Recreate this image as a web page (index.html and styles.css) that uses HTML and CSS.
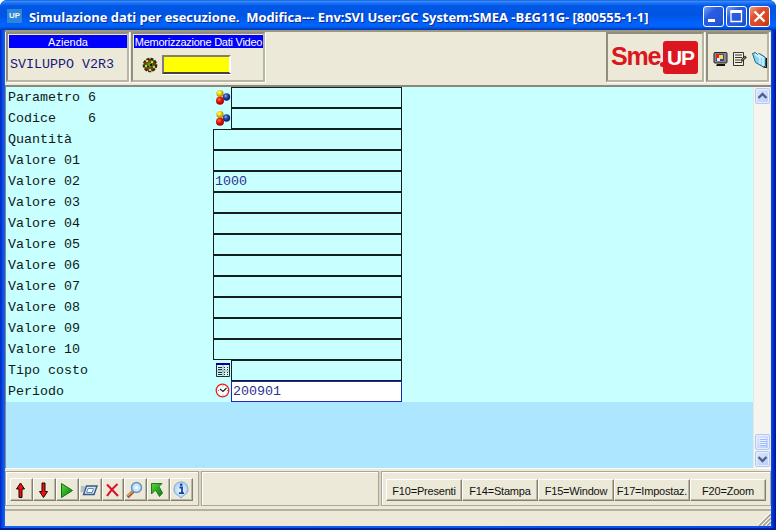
FILE: index.html
```html
<!DOCTYPE html>
<html lang="it">
<head>
<meta charset="utf-8">
<title>Simulazione dati per esecuzione</title>
<link rel="stylesheet" href="styles.css">
</head>
<body>
<svg class="defs" width="0" height="0" aria-hidden="true">
  <defs>
    <radialGradient id="gy" cx=".4" cy=".35"><stop offset="0" stop-color="#fff9a0"/><stop offset=".5" stop-color="#f5dd10"/><stop offset="1" stop-color="#b99c00"/></radialGradient>
    <radialGradient id="gr" cx=".4" cy=".35"><stop offset="0" stop-color="#ff7a60"/><stop offset=".5" stop-color="#ee1c10"/><stop offset="1" stop-color="#b00800"/></radialGradient>
    <radialGradient id="gb" cx=".4" cy=".35"><stop offset="0" stop-color="#9ab8f0"/><stop offset=".5" stop-color="#2c50b8"/><stop offset="1" stop-color="#14287c"/></radialGradient>
    <linearGradient id="gg" x2="1" y2="1"><stop offset="0" stop-color="#5cd63c"/><stop offset="1" stop-color="#087a08"/></linearGradient>
    <radialGradient id="lens"><stop offset="0" stop-color="#f4fcff"/><stop offset="1" stop-color="#a8d4f4"/></radialGradient>
    <symbol id="balls" viewBox="0 0 16 16">
      <circle cx="5" cy="4.500" r="3.600" fill="url(#gy)"/><circle cx="11.500" cy="8" r="3.700" fill="url(#gb)"/><circle cx="5" cy="11.700" r="4" fill="url(#gr)"/>
    </symbol>
  </defs>
</svg>
<div class="window">
  <header class="titlebar">
    <span class="app-icon">UP</span>
    <h1 class="title">Simulazione dati per esecuzione.&nbsp; Modifica--- Env:SVI User:GC System:SMEA -B£G11G- [800555-1-1]</h1>
    <div class="win-buttons">
      <button class="wb"><svg width="21" height="21"><rect x="5" y="13" width="7" height="3" fill="#fff"/></svg></button>
      <button class="wb"><svg width="21" height="21"><path d="M5 5.500h10.500v10H5z" fill="none" stroke="#fff" stroke-width="1.300"/><path d="M4.400 5.500h11.700" stroke="#fff" stroke-width="3"/></svg></button>
      <button class="wb close"><svg width="21" height="21"><path d="M5.500 5.500l10 10M15.500 5.500l-10 10" stroke="#fff" stroke-width="2.300"/></svg></button>
    </div>
  </header>

  <div class="client">
    <div class="topbar">
      <section class="panel azienda"><h2 class="cap">Azienda</h2><div class="mono company">SVILUPPO V2R3</div></section>
      <section class="panel memo"><h2 class="cap tight">Memorizzazione Dati Video</h2>
        <div class="memo-row">
          <svg width="16" height="16"><circle cx="8" cy="8" r="6.300" fill="#4d6b18" stroke="#222c08" stroke-width="2" stroke-dasharray="3 1.200"/><path d="M4 3h2v2H4zM9 4h2v2H9zM3 8h2v2H3zM11 9h2v2h-2zM7 12h2v2H7z" fill="#f0c840"/><path d="M7 2h2v2H7zM2 5h2v2H2zM11 6h2v2h-2zM4 11h2v2H4zM9 10h2v2H9z" fill="#a02018"/><path d="M6 6h3v4H6z" fill="#50a030"/><path d="M8 7h2v2H8zM5 9h2v1H5z" fill="#181808"/></svg>
          <span class="yellow"></span>
        </div>
      </section>
      <div class="spacer"></div>
      <section class="panel logo"><span class="sme">Sme</span><span class="dot"></span><span class="up">UP</span></section>
      <section class="panel tools">
        <svg width="15" height="16"><rect x="1" y="1.500" width="13" height="10.500" rx="1" fill="#888" stroke="#222"/><rect x="3" y="3" width="8" height="7" fill="#3048b0"/><rect x="3" y="3" width="3" height="4" fill="#e82020"/><rect x="6" y="4" width="4" height="4" fill="#ffe020"/><rect x="4" y="7" width="3" height="3" fill="#e8e8f8"/><path d="M4 13h8v2H3z" fill="#111"/></svg>
        <svg width="15" height="16"><path d="M1.500 1.500h10v13h-10z" fill="#f4f0dc" stroke="#333"/><path d="M3 4h7M3 6.500h7M3 9h5M3 11.500h7" stroke="#333"/><path d="M9 10l5-4.500" stroke="#222" stroke-width="2.400"/><path d="M9.500 9.500l4-3.500" stroke="#c8a850"/></svg>
        <svg width="17" height="17"><path d="M1.500 2.500l3-1 2 2 2-1 6 4v8.500l-2 1-8-4.500z" fill="#88d4f4" stroke="#24627e"/><path d="M7 3.500l5 3.500v8M4 3l5 4v6" stroke="#e0f8ff" stroke-width="1.300" fill="none"/><path d="M12.500 16l3 .5V7" stroke="#111" fill="none" stroke-width="1.200"/></svg>
      </section>
    </div>

    <div class="work">
      <main class="view">
        <div class="form mono">
          <div class="row"><label>Parametro 6</label><svg class="ic"><use href="#balls"/></svg><span class="field"></span></div>
          <div class="row"><label>Codice&nbsp;&nbsp;&nbsp; 6</label><svg class="ic"><use href="#balls"/></svg><span class="field"></span></div>
          <div class="row"><label>Quantità</label><span class="field"></span></div>
          <div class="row"><label>Valore 01</label><span class="field"></span></div>
          <div class="row"><label>Valore 02</label><span class="field">1000</span></div>
          <div class="row"><label>Valore 03</label><span class="field"></span></div>
          <div class="row"><label>Valore 04</label><span class="field"></span></div>
          <div class="row"><label>Valore 05</label><span class="field"></span></div>
          <div class="row"><label>Valore 06</label><span class="field"></span></div>
          <div class="row"><label>Valore 07</label><span class="field"></span></div>
          <div class="row"><label>Valore 08</label><span class="field"></span></div>
          <div class="row"><label>Valore 09</label><span class="field"></span></div>
          <div class="row"><label>Valore 10</label><span class="field"></span></div>
          <div class="row"><label>Tipo costo</label><svg class="ic" viewBox="0 0 16 16"><path d="M1.500 1.500h13v13h-13z" fill="#d8f4f4" stroke="#1c3038"/><path d="M1 2h14" stroke="#0000a0" stroke-width="2"/><path d="M3 5.500h4M3 7.500h4M9 5.500h1M9 7.500h1M12 5.500h1M12 7.500h1M3 10.500h4M3 12.500h4M9 10.500h1M9 12.500h1M12 10.500h1M12 12.500h1" stroke="#1c3038"/><path d="M2 9h12M8 3v11" stroke="#7c9898" stroke-width=".7"/></svg><span class="field"></span></div>
          <div class="row"><label>Periodo</label><svg class="ic" viewBox="0 0 16 16"><circle cx="7.500" cy="7.500" r="6.300" fill="#fff" stroke="#f02020" stroke-width="1.300"/><path d="M5 6l3 2.500L11.500 5" fill="none" stroke="#222" stroke-width="1.200"/><path d="M8 2.500v1M8 11.500v1M3 7.500h1M12 7.500h1" stroke="#777"/></svg><span class="field active">200901</span></div>
        </div>
      </main>
      <div class="scroll">
        <button class="sb"><svg width="15" height="16"><path d="M3.500 10l4-4 4 4" fill="none" stroke="#4d6185" stroke-width="2.400"/></svg></button>
        <div class="track"></div>
        <button class="sb"><svg width="15" height="16"><path d="M4 4.500h7M4 6.500h7M4 8.500h7M4 10.500h7" stroke="#eef4fe"/><path d="M5 5.500h7M5 7.500h7M5 9.500h7M5 11.500h7" stroke="#8cb0f8" stroke-width=".7"/></svg></button>
        <button class="sb"><svg width="15" height="16"><path d="M3.500 6l4 4 4-4" fill="none" stroke="#4d6185" stroke-width="2.400"/></svg></button>
      </div>
    </div>

    <div class="bottombar">
      <div class="group icons">
        <button class="tb"><svg width="20" height="20"><path d="M9.500 3l4 6h-2.500v8.500H8V9H5.500z" fill="#f01010" stroke="#200"/></svg></button>
        <button class="tb"><svg width="20" height="20"><path d="M9.500 17.500l4-6h-2.500V3H8v8.500H5.500z" fill="#f01010" stroke="#200"/></svg></button>
        <button class="tb"><svg width="20" height="20"><path d="M4.500 3.500l11 7-11 7z" fill="url(#gg)" stroke="#107010"/></svg></button>
        <button class="tb"><svg width="20" height="20"><path d="M6.500 6h10.500l-3 8.500H3.500z" fill="#d8e8fa" stroke="#345884" stroke-width="1.400"/><path d="M8 8.500h5.500l-1.300 4H6.600z" fill="#fff" stroke="#6088b8"/><path d="M1 7h4M1 9h4M.5 11h4" stroke="#7898bc"/></svg></button>
        <button class="tb"><svg width="20" height="20"><path d="M4 4.500q5 5 11 11.500M14.500 4q-6 5-10.500 12" fill="none" stroke="#d8142c" stroke-width="2.100"/></svg></button>
        <button class="tb"><svg width="20" height="20"><path d="M2.500 17l6-6" stroke="#985830" stroke-width="3.400"/><path d="M2.500 16l5.500-5" stroke="#e8a878" stroke-width="1.200"/><circle cx="11.500" cy="7.500" r="5" fill="url(#lens)" stroke="#6c94c4" stroke-width="1.500"/></svg></button>
        <button class="tb"><svg width="20" height="20"><path d="M3.500 3.500h10.500l-3 3 3.500 6.500-3 3.500-4-6.500-4 4z" fill="url(#gg)" stroke="#207820"/></svg></button>
        <button class="tb"><svg width="20" height="20"><path d="M10 2a7 7 0 0 1 3 13.300L10 18l-3-2.700A7 7 0 0 1 10 2z" fill="url(#lens)" stroke="#88a8cc"/><path d="M8.500 7.500H11v5.500M8 13.200h5" fill="none" stroke="#1840a0" stroke-width="1.800"/><circle cx="10.200" cy="4.800" r="1.300" fill="#1840a0"/></svg></button>
      </div>
      <div class="group blank"></div>
      <div class="group keys">
        <button class="key">F10=Presenti</button><button class="key">F14=Stampa</button><button class="key">F15=Window</button><button class="key">F17=Impostaz.</button><button class="key">F20=Zoom</button>
      </div>
    </div>
    <footer class="status"><svg width="13" height="13"><path d="M1 13L13 1M5 13l8-8M9 13l4-4" stroke="#a5a294" stroke-width="1.700"/><path d="M0 12L12 0M4 12l8-8M8 12l4-4" stroke="#fff"/></svg></footer>
  </div>
</div>
</body>
</html>
```
FILE: styles.css
```css
* { box-sizing: border-box; }
body { margin: 0; background: #fff; font-family: "Liberation Sans", sans-serif; overflow: hidden; }
button { padding: 0; margin: 0; font: inherit; }
svg { display: block; flex: none; }
.defs { position: absolute; }
.window {
  width: 776px; height: 530px; padding: 0 5px 2px 5px;
  display: flex; flex-direction: column;
  background: linear-gradient(90deg, #0026c8 0, #0a50e8 3px, #1464f0 5px, #0a50e8 771px, #0030d4 773px, #001490 776px);
  border-bottom: 2px solid #001c98;
  border-radius: 7px 7px 0 0;
}
.titlebar {
  height: 30px; margin: 0 -5px; padding: 3px 6px 0 7px; flex: none;
  display: flex; align-items: center;
  border-radius: 7px 7px 0 0;
  background: linear-gradient(#0846c8 0, #3c90ff 1px, #1c74f8 3px, #0058e6 6px, #0054e3 15px, #0060fa 22px, #0066ff 26px, #0050dc 28px, #0038b8 30px);
}
.app-icon {
  width: 15px; height: 14px; background: #2f86d8; color: #e8f6ff;
  font-size: 8px; font-weight: bold; line-height: 14px; text-align: center; margin: -2px 7px 0 0;
}
.title {
  margin: 0; flex: 1; color: #fff; white-space: nowrap;
  font: bold 13px/20px "Open Sans", sans-serif; letter-spacing: -0.04px;
  text-shadow: 1px 1px 0 #0a2a90;
}
.win-buttons { display: flex; gap: 2px; }
.wb {
  width: 21px; height: 21px; border: 1px solid #fff; border-radius: 3px; overflow: hidden;
  background: linear-gradient(135deg, #7ca4f4, #2a5ce0 35%, #2458d8 75%, #184cc0);
}
.wb svg { margin: -1px; }
.close { background: linear-gradient(135deg, #f0a084, #e05030 35%, #d84420 75%, #b83010); }

.client { flex: 1; display: flex; flex-direction: column; background: #ece9d8; min-height: 0; }
.topbar { height: 55px; display: flex; padding: 1px 2px 2px 0; border-top: 2px solid #9c9884; flex: none; }
.panel {
  border: 2px solid; border-color: #918e80 #b8b5a2 #b8b5a2 #918e80; height: 50px;
  box-shadow: 1px 1px 0 #fff; flex: none; margin-top: -1px;
}
.azienda { width: 123px; padding: 1px 0 0 1px; margin-left: 1px; }
.memo { width: 134px; margin-left: 2px; padding: 1px 0 0 1px; }
.cap {
  margin: 0; background: #00f; color: #fff; height: 13px; text-align: center;
  font: 11px/14px "Liberation Sans", sans-serif; white-space: nowrap;
}
.tight { letter-spacing: -0.25px; }
.mono { font-family: "Liberation Mono", monospace; font-size: 13.33px; }
.company { color: #18187c; line-height: 16px; padding: 9px 0 0 1px; white-space: nowrap; }
.memo-row { display: flex; align-items: center; padding: 7px 0 0 8px; gap: 4px; }
.yellow {
  width: 69px; height: 19px; background: #ff0; border: 2px solid;
  border-color: #827f70 #fff #444 #827f70; box-shadow: 0 1px 0 #fff;
}
.spacer { flex: 1; }
.logo { width: 98px; display: flex; align-items: center; padding-left: 2px; color: #dc1620; font-weight: bold; }
.sme { font-size: 25px; letter-spacing: -1.2px; line-height: 30px; width: 48px; margin: -3px 0 0 1px; }
.dot { width: 5px; height: 5px; border-radius: 50%; background: #dc1620; margin: 14px -2px 0 1px; box-shadow: 1px 0 0 #f4b0b0; }
.up {
  background: #dc1620; color: #fff; width: 35px; height: 33px; border-radius: 3px;
  font-size: 21px; line-height: 34px; text-align: center; letter-spacing: -1px;
}
.tools { width: 63px; margin-left: 2px; display: flex; align-items: center; padding: 4px 0 0 5px; gap: 4px; overflow: hidden; }

.work { height: 384px; display: flex; border-top: 2px solid #8c897c; border-left: 1px solid #8c897c; flex: none; border-bottom: 1px solid #fff; padding-right: 1px; }
.view { flex: 1; background: #ade6ff; }
.form { background: #c8ffff; color: #101818; }
.row { height: 21px; display: flex; width: 396px; }
.row label { flex: none; width: 207px; padding-left: 2px; line-height: 21px; }
.row label:has(+ .ic) { width: 209px; }
.ic { width: 16px; height: 16px; margin-top: 2px; }
.field { flex: 1; border: 1px solid #142020; padding-left: 1px; line-height: 19px; color: #2c3092; height: 21px; }
.active { background: #fff; border-color: #2424b8; }
.scroll { width: 17px; background: #f5f4ee; display: flex; flex-direction: column; align-items: center; border-left: 1px solid #ebe9df; padding: 1px 0; gap: 1px; }
.track { flex: 1; }
.sb {
  width: 15px; height: 16px; border: 1px solid #b4c8f6; border-radius: 2px;
  background: linear-gradient(135deg, #dce8fe, #b9cdfb); box-shadow: inset 0 0 0 1px #e6eefe;
}
.sb svg { margin: -1px; }

.bottombar { height: 35px; margin-top: 2px; display: flex; gap: 2px; flex: none; background: #d8d5c6; }
.group { border: 1px solid #aaa797; background: #ece9d8; box-shadow: inset 1px 1px 0 #fff; display: flex; padding: 6px 5px 0; height: 35px; }
.icons { width: 194px; padding-left: 4px; }
.blank { width: 179px; }
.keys { flex: 1; padding: 7px 4px 0; }
.tb, .key {
  background: #ece9d8; border: 1px solid; border-color: #fff #827f70 #827f70 #fff;
  box-shadow: inset -1px -1px 0 #bab6a4;
}
.tb { width: 23px; height: 23px; }
.key { width: 76px; height: 22px; font-size: 11px; line-height: 23px; color: #111; white-space: nowrap; letter-spacing: -0.2px; }
.status { flex: 1; margin-top: 3px; border-top: 2px solid #b4b1a0; display: flex; justify-content: flex-end; align-items: flex-end; }
```
